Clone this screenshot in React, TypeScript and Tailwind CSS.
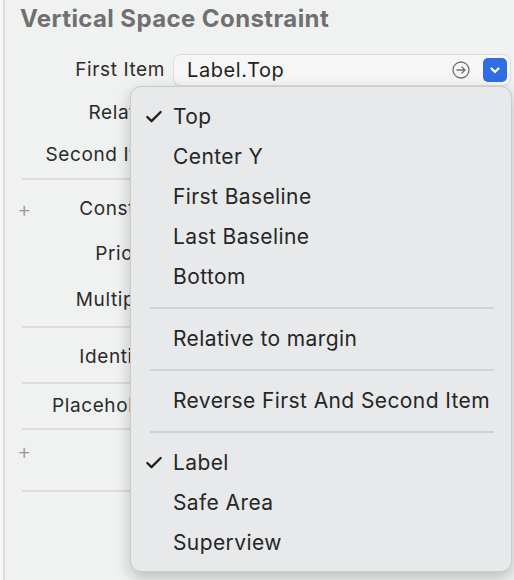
import { Check } from "lucide-react"

const font = { fontFamily: "Inter, 'Liberation Sans', sans-serif" }

type MenuEntry = { label: string; checked?: boolean } | "sep"

const menu: MenuEntry[] = [
  { label: "Top", checked: true },
  { label: "Center Y" },
  { label: "First Baseline" },
  { label: "Last Baseline" },
  { label: "Bottom" },
  "sep",
  { label: "Relative to margin" },
  "sep",
  { label: "Reverse First And Second Item" },
  "sep",
  { label: "Label", checked: true },
  { label: "Safe Area" },
  { label: "Superview" },
]

function Row({ label, plus, className }: { label?: string; plus?: boolean; className: string }) {
  return (
    <div className={`relative flex h-[32px] items-center ${className}`}>
      {plus && <span className="absolute left-[17px] text-[22px] font-light leading-none text-[#9a9a9a]">+</span>}
      <span className="w-[165px] whitespace-nowrap text-right text-[19px] tracking-[0.6px] text-[#2b2b2b]">{label}</span>
    </div>
  )
}

function Line({ className }: { className: string }) {
  return <div className={`ml-[22px] mr-[20px] h-[2px] bg-[#dcdcdc] ${className}`} />
}

function Popup() {
  return (
    <div className="absolute left-[130px] top-[86px] w-[382px] rounded-[11px] border border-[#c9cbcc] bg-[#e7e9ea] pt-[10px] pb-[8px] shadow-[0_6px_16px_rgba(0,0,0,0.22)]">
      {menu.map((m, i) =>
        m === "sep" ? (
          <div key={i} className="flex h-[22px] items-center pl-[19px] pr-[17px]">
            <div className="h-[2px] w-full bg-[#d0d2d3]" />
          </div>
        ) : (
          <div key={i} className="flex h-[40px] items-center text-[21px] tracking-[0.4px] text-[#262626]">
            <span className="flex w-[42px] justify-end pr-[9px]">
              {m.checked && <Check size={20} strokeWidth={2.8} className="text-[#1f1f1f]" />}
            </span>
            <span>{m.label}</span>
          </div>
        )
      )}
    </div>
  )
}

export default function App() {
  return (
    <div className="relative flex h-[580px] w-[514px] overflow-hidden bg-[#f0f1f1]" style={font}>
      <div className="w-[5px] border-r-2 border-[#dcdcdc] bg-[#f7f7f7]" />
      <div className="flex-1">
        <div className="h-[54px] pl-[15px] pt-[1px] text-[24px] font-bold tracking-[0.4px] text-[#707070]">Vertical Space Constraint</div>

        <div className="flex h-[32px] items-center">
          <span className="w-[160px] whitespace-nowrap text-right text-[19px] tracking-[0.6px] text-[#2b2b2b]">First Item</span>
          <div className="ml-[8px] flex h-[32px] w-[338px] items-center rounded-[8px] border border-[#dddddd] bg-[#f6f6f6] pl-[13px] pr-[3px] shadow-[0_1px_1px_rgba(0,0,0,0.06)]">
            <span className="flex-1 text-[20px] tracking-[0.6px] text-[#1f1f1f]">Label.Top</span>
            <svg width="18" height="18" viewBox="0 0 18 18" className="mr-[13px]" fill="none" stroke="#707070" strokeWidth="1.3" strokeLinecap="round" strokeLinejoin="round">
              <circle cx="9" cy="9" r="8" />
              <path d="M5 9h8M10 6l3 3-3 3" />
            </svg>
            <div className="flex h-[24px] w-[24px] items-center justify-center rounded-[5px] bg-[#2f6de3]">
              <svg width="10" height="7" viewBox="0 0 10 7" fill="none" stroke="white" strokeWidth="2.2" strokeLinecap="round" strokeLinejoin="round">
                <path d="M1.5 1.5 5 5l3.5-3.5" />
              </svg>
            </div>
          </div>
        </div>

        <div className="-ml-[5px]">
          <Row label="Relation" className="mt-[11px]" />
          <Row label="Second Item" className="mt-[10px]" />
          <Line className="mt-[7px]" />
          <Row label="Constant" plus className="mt-[13px]" />
          <Row label="Priority" className="mt-[13px]" />
          <Row label="Multiplier" className="mt-[14px]" />
          <Line className="mt-[10px]" />
          <Row label="Identifier" className="mt-[13px]" />
          <Line className="mt-[9px]" />
          <Row label="Placeholder" className="mt-[6px]" />
          <Line className="mt-[6px]" />
          <Row plus className="mt-[5px]" />
          <Line className="mt-[23px]" />
        </div>
      </div>
      <Popup />
    </div>
  )
}
